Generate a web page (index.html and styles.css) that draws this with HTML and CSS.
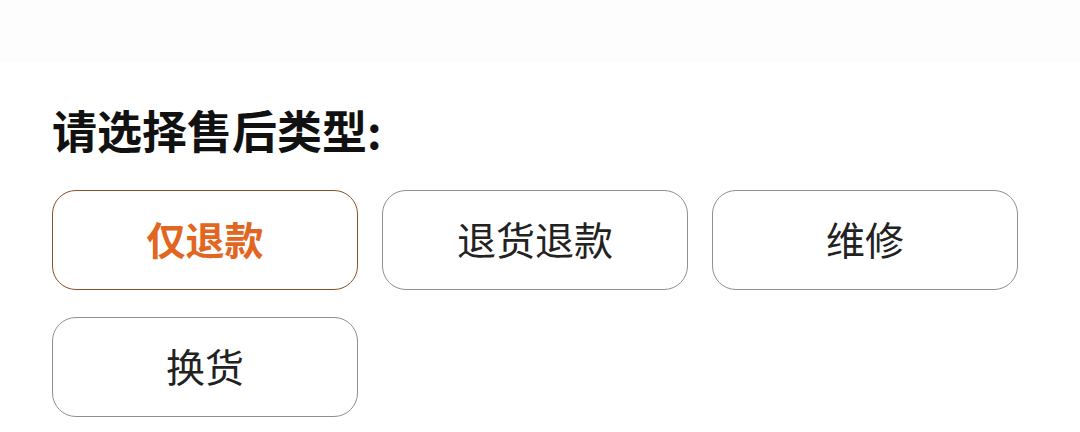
FILE: index.html
```html
<!DOCTYPE html>
<html lang="zh-CN">
<head>
    <meta charset="UTF-8">
    <meta name="viewport" content="width=device-width, initial-scale=1.0">
    <title>售后类型</title>
    <link rel="stylesheet" href="styles.css">
</head>
<body>

    <div class="topbar"></div>

    <div class="card">

        <h2 class="title">请选择售后类型:</h2>

        <div class="options">
            <button class="option active">仅退款</button>
            <button class="option">退货退款</button>
            <button class="option">维修</button>
            <button class="option">换货</button>
        </div>

    </div>

</body>
</html>
```

FILE: styles.css
```css
body{
    margin: 0px;
    background: #ffffff;
    font-family: "Noto Sans CJK SC", "Noto Sans", sans-serif;
}

.topbar{
    height: 62px;
    background: #fdfdfd;
}

.card{
    background: white;
    padding: 0 52px;
}

.title{
    margin: 0;
    padding-top: 36px;
    font-size: 45px;
    line-height: 64px;
    font-weight: 700;
    color: #111111;
}

.options{
    display: grid;
    grid-template-columns: repeat(3, 306px);
    column-gap: 24px;
    row-gap: 27px;
    margin-top: 28px;
}

.option{
    height: 100px;
    border: 1px solid #8f8f8f;
    border-radius: 24px;
    background: white;
    font-family: inherit;
    font-size: 39px;
    color: #222222;
    padding: 0 0 4px;
}

.active{
    border-color: #8a4f2c;
    color: #e2661f;
    font-weight: 700;
}
```
